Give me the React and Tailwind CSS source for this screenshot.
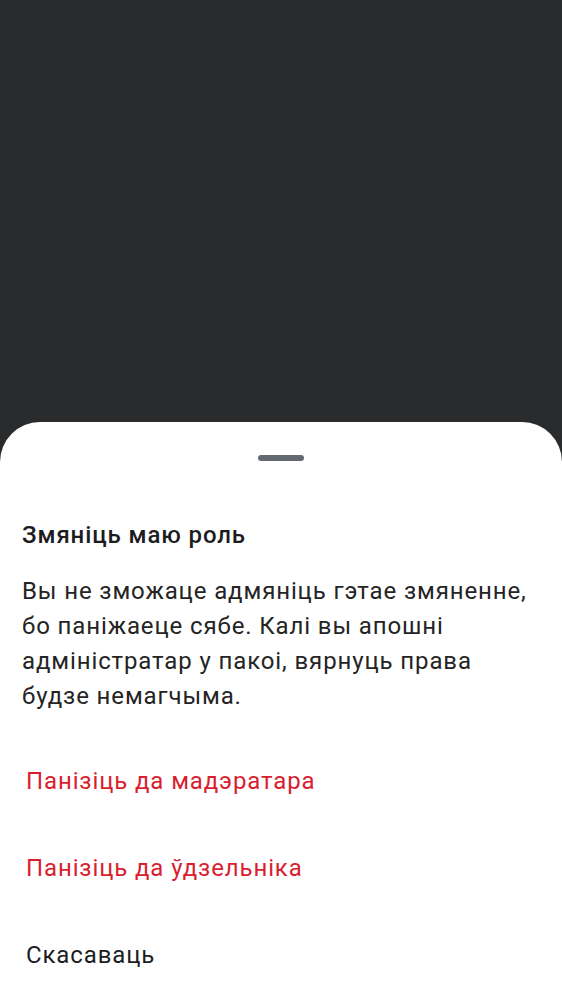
export default function App() {
  const actions = [
    { label: 'Панізіць да мадэратара', danger: true },
    { label: 'Панізіць да ўдзельніка', danger: true },
    { label: 'Скасаваць', danger: false },
  ]

  return (
    <div
      className="flex h-[1000px] w-full flex-col overflow-hidden bg-[#2a2b2d]"
      style={{ fontFamily: 'Roboto, "Noto Sans", sans-serif' }}
    >
      {/* Backdrop area */}
      <div className="h-[422px] shrink-0" />

      {/* Bottom sheet */}
      <div className="flex flex-1 flex-col rounded-t-[40px] bg-white">
        {/* Handle */}
        <div className="flex justify-center pt-[33px]">
          <div className="h-[6px] w-[46px] rounded-full bg-[#646a72]" />
        </div>

        <div className="px-[22px] pt-[58px]">
          <h2 className="text-[24px] font-medium leading-[32px] tracking-[0.9px] text-[#1d1d1f]">
            Змяніць маю роль
          </h2>
          <p className="mt-[23px] text-[24px] leading-[35px] tracking-[0.88px] text-[#242424]">
            Вы не зможаце адмяніць гэтае змяненне, бо паніжаеце сябе. Калі вы апошні адміністратар у пакоі, вярнуць права будзе немагчыма.
          </p>
        </div>

        {/* Actions */}
        <div className="mt-[23px] flex flex-col">
          {actions.map(a => (
            <button
              key={a.label}
              className={
                'flex h-[87px] shrink-0 items-center px-[26px] text-left text-[24px] leading-[32px] tracking-[0.88px] ' +
                (a.danger ? 'text-[#d81e30]' : 'text-[#1d1d1f]')
              }
            >
              {a.label}
            </button>
          ))}
        </div>
      </div>
    </div>
  )
}
